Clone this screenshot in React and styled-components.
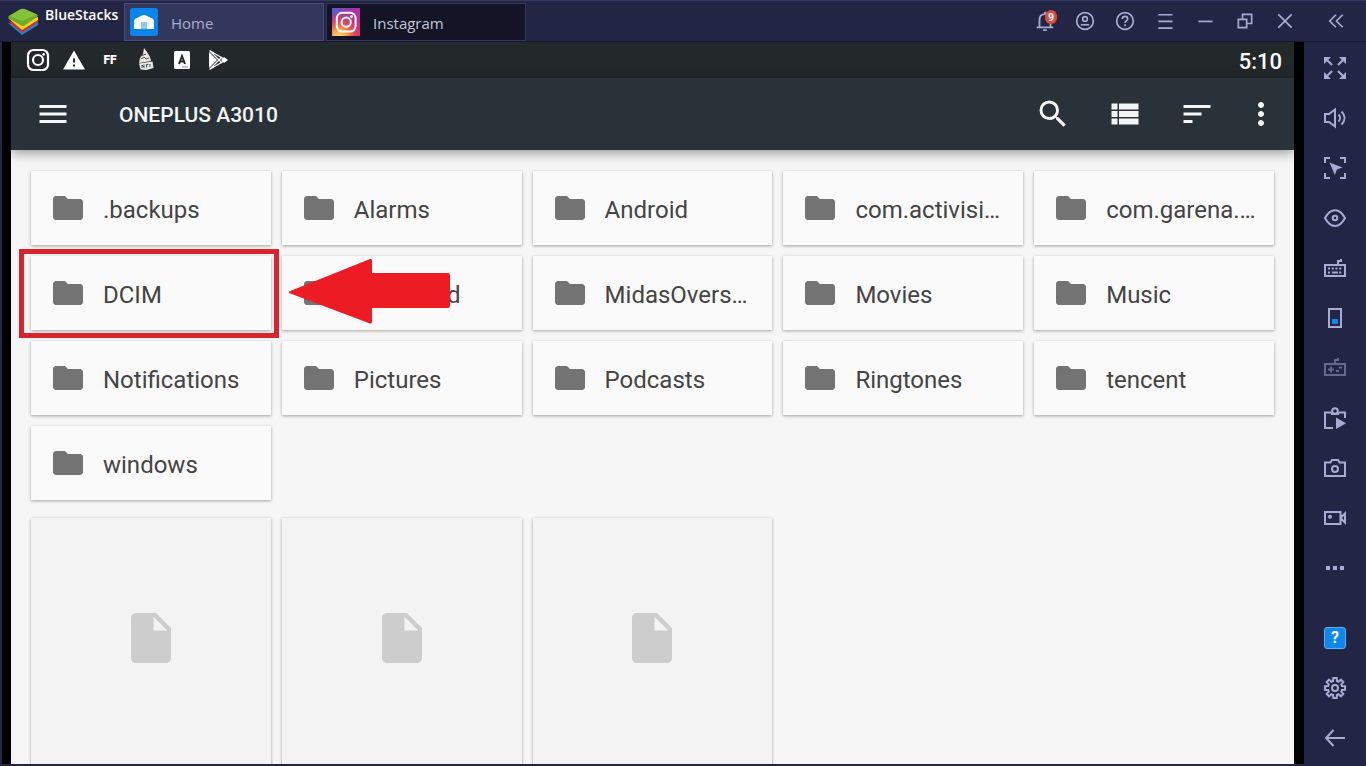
import React from 'react'
import styled, { createGlobalStyle } from 'styled-components'
import {
  MdFolder, MdInsertDriveFile, MdMoreVert, MdSearch, MdSort, MdViewList, MdWarning, MdMenu
} from 'react-icons/md'

const GlobalStyle = createGlobalStyle`
  * {
    box-sizing: border-box;
  }

  body {
    margin: 0;
    font-family: Roboto, sans-serif;
    background-color: #232545;
  }

  button {
    margin: 0;
    padding: 0;
    border: none;
    background: none;
    color: inherit;
    font: inherit;
    cursor: pointer;
  }
`

const Window = styled.div`
  display: flex;
  flex-direction: column;
  height: 100vh;
  overflow: hidden;
  border-top: 1px solid #34375c;
  background-color: #232545;
`

const TitleBar = styled.header`
  display: flex;
  flex: none;
  height: 41px;
  padding-left: 8px;
  border-bottom: 1px solid #15172e;
  font-family: 'Open Sans', sans-serif;
  color: #a9acd0;
`

const Brand = styled.div`
  display: flex;
  gap: 7px;
  width: 116px;
  padding-top: 5px;
  font-size: 14px;
  line-height: 18px;
  font-weight: 600;
  color: #ffffff;

  > svg {
    flex: none;
    margin-top: 2px;
  }
`

const Tab = styled.button`
  display: flex;
  align-items: center;
  gap: 13px;
  
  width: 200px;
  height: 38px;
  margin: 2px 2px 0 0;
  padding: 0 5px;
  border: 1px solid ${({ $active }) => $active ? '#484c7c' : '#33365a'};
  background-color: ${({ $active }) => $active ? '#34375c' : '#131527'};
  color: ${({ $active }) => $active ? '#a9acd0' : '#c4c6d8'};
  font-size: 15px;
`

const TabLabel = styled.span`
  padding-top: 2px;
`

const WindowControls = styled.div`
  display: flex;
  margin-left: auto;
`

const ControlButton = styled.button`
  display: flex;
  align-items: center;
  justify-content: center;
  position: relative;
  
  width: ${({ $wide }) => $wide ? '61px' : '40px'};
  height: 40px;
`

const Badge = styled.span`
  position: absolute;
  top: 9px;
  left: 20px;
  
  width: 12px;
  height: 14px;
  border-radius: 6px;
  background-color: #e04a3c;
  color: #ffffff;
  font-size: 10px;
  line-height: 14px;
  font-weight: 700;
  text-align: center;
`

const Body = styled.div`
  display: flex;
  flex: 1;
  min-height: 0;
`

const Device = styled.main`
  display: flex;
  flex: 1;
  flex-direction: column;
  
  min-width: 0;
  margin: 0 0 2px 2px;
  padding: 0 10px 0 9px;
  background-color: #000000;
  overflow: hidden;
`

const StatusBar = styled.div`
  display: flex;
  flex: none;
  align-items: center;
  gap: 12px;
  
  height: 36px;
  padding: 0 12px 0 15px;
  background-color: #23282b;
  color: #ffffff;
`

const Notice = styled.span`
  display: flex;
  align-items: center;
  justify-content: center;
  width: 24px;
  height: 24px;
  font-size: 12px;
  font-weight: 900;
`

const Clock = styled.time`
  margin-left: auto;
  padding-top: 2px;
  font-size: 22px;
  font-weight: 500;
`

const AppBar = styled.div`
  display: flex;
  flex: none;
  align-items: center;
  position: relative;
  
  height: 72px;
  padding: 0 23px 0 24px;
  background-color: #283238;
  box-shadow: 0 2px 12px rgb(0 0 0 / 45%);
  color: #f5f5f5;
`

const AppBarTitle = styled.h1`
  flex: 1;
  margin: 0 0 0 48px;
  padding-top: 2px;
  font-size: 21px;
  font-weight: 500;
`

const AppBarActions = styled.div`
  display: flex;
  gap: 36px;
`

const AppBarButton = styled.button`
  display: flex;
  align-items: center;
  justify-content: center;
  width: ${({ $narrow }) => $narrow ? '20px' : '36px'};
  height: 36px;

  > svg {
    flex: none;
  }
`

const Content = styled.div`
  flex: 1;
  min-height: 0;
  padding: 21px 20px 0;
  background-color: #f6f6f6;
  overflow: hidden;
`

const Grid = styled.ul`
  display: grid;
  grid-template-columns: repeat(5, minmax(0, 1fr));
  gap: 11px;
  
  margin: 0 0 18px;
  padding: 0;
  list-style-type: none;
`

const GridItem = styled.li`
  position: relative;
`

const FolderCard = styled.button`
  display: flex;
  align-items: center;
  gap: 17px;
  
  width: 100%;
  height: 74px;
  padding: 0 16px 0 19px;
  background-color: #fafafa;
  box-shadow: 0 1px 3px rgb(0 0 0 / 35%);
  color: #737373;

  > svg {
    flex: none;
  }
`

const FolderName = styled.span`
  padding-top: 3px;
  font-size: 24px;
  line-height: 30px;
  color: #444444;
  text-align: left;
  white-space: nowrap;
  overflow: hidden;
  text-overflow: ellipsis;
`

const FileCard = styled.button`
  display: flex;
  align-items: center;
  justify-content: center;
  
  width: 100%;
  height: 240px;
  background-color: #f3f3f3;
  color: #cdcdcd;
`

const FileItem = styled.li`
  height: 312px;
  background-color: #f3f3f3;
  box-shadow: 0 1px 3px rgb(0 0 0 / 35%);
`

const Highlight = styled.div`
  position: absolute;
  inset: -7px -8px -8px -12px;
  z-index: 1;
  border: 5px solid #d9232e;
  pointer-events: none;
`

const Arrow = styled.svg`
  position: absolute;
  top: 2px;
  left: 257px;
  z-index: 2;
  pointer-events: none;
`

const SideBar = styled.nav`
  display: flex;
  flex: none;
  flex-direction: column;
  
  width: 62px;
  padding-top: 1px;
  color: #a9acd0;
`

const SideButton = styled.button`
  display: flex;
  flex: none;
  align-items: center;
  justify-content: center;
  
  height: 50px;
  opacity: ${({ $dimmed }) => $dimmed ? 0.5 : 1};
`

const SideSpacer = styled.div`
  height: 20px;
`

const HelpTile = styled.span`
  width: 22px;
  height: 22px;
  border: 1px solid #5ab0f2;
  border-radius: 3px;
  background-color: #0d87ea;
  color: #ffffff;
  font-size: 16px;
  line-height: 20px;
  font-weight: 700;
  text-align: center;
`

const Line = ({ size = 24, width = 2, children }) => (
  <svg width={size} height={size} viewBox="0 0 24 24" fill="none" stroke="currentColor" strokeWidth={width} aria-hidden="true">
    {children}
  </svg>
)

const BlueStacksLogo = () => (
  <svg width="30" height="28" viewBox="0 0 30 28" aria-hidden="true">
    <path d="M0 15l14 12 16-10v-4L15 17z" fill="#2f7fc4" />
    <path d="M0 13l14 11.500 16-10.500v-3L15 15z" fill="#c9302b" />
    <path d="M0 10l14 12L30 12V9L15 13z" fill="#f8cf1c" />
    <path d="M1 8L12 1.500q2.500-1.500 5-.3L29 6.500q1.500 1 0 2.500L16.500 17.500q-1.700 1.200-3.300 0L.8 10.500Q-.3 9 1 8z" fill="#6cad2b" />
    <path d="M1 8L12 1.500q2.500-1.500 5-.3L29 6.500 14 13z" fill="#86c13c" />
  </svg>
)

const HomeLogo = () => (
  <svg width="28" height="28" viewBox="0 0 28 28" aria-hidden="true">
    <rect width="28" height="28" rx="3" fill="#0a86ea" />
    <path d="M4 12.500q0-1 1-1.500l7.500-3.700q1.500-.7 3 0L23 11q1 .5 1 1.500V20q0 1-1 1H5q-1 0-1-1z" fill="#fff" />
    <path d="M11 14h6v7h-6z" fill="#8cc8f5" />
  </svg>
)

const InstagramLogo = () => (
  <svg width="28" height="28" viewBox="0 0 28 28" fill="none" aria-hidden="true">
    <defs>
      <linearGradient id="insta-base" x1="0" y1="0" x2="1" y2="1">
        <stop offset="0" stopColor="#4c5fd7" />
        <stop offset="0.35" stopColor="#a034ac" />
        <stop offset="1" stopColor="#d62f7a" />
      </linearGradient>
      <radialGradient id="insta-glow" cx="0.25" cy="1.05" r="0.95">
        <stop offset="0" stopColor="#ffdc7a" />
        <stop offset="0.3" stopColor="#fba246" />
        <stop offset="0.6" stopColor="#ee4b50" stopOpacity="0.8" />
        <stop offset="1" stopColor="#d62f7a" stopOpacity="0" />
      </radialGradient>
    </defs>
    <path d="M0 0h28v28H0z" fill="url(#insta-base)" />
    <path d="M0 0h28v28H0z" fill="url(#insta-glow)" />
    <rect x="4.800" y="4.800" width="18.800" height="18.800" rx="5.500" stroke="#fff" strokeWidth="2" />
    <circle cx="14.200" cy="14.200" r="4.600" stroke="#fff" strokeWidth="2" />
    <circle cx="19.500" cy="8.600" r="1.400" fill="#fff" />
  </svg>
)

const ShipIcon = () => (
  <svg width="18" height="24" viewBox="0 0 18 24" fill="none" stroke="#23282b" aria-hidden="true">
    <path d="M7 0l3 4 3 5 1 4-12 2 1-5 3-4z" fill="#e8e8e8" stroke="none" />
    <path d="M2 15.500l13.500-2 1 6.500-7 2-6-.5z" fill="#e8e8e8" stroke="none" />
    <path d="M5 7.500l4-1.500M4 11l3-2 2 2 3-1M5 20v-3l2 2.500v-3M9.500 19.500v-3h2M13 19v-3" strokeWidth="0.800" />
  </svg>
)

// alternates between the tooth radius and the body radius, two points each
const gearPath = (teeth, outer, inner) => {
  const points = []

  for (let i = 0; i < teeth; i++) {
    const angle = (i * 2 * Math.PI) / teeth - Math.PI / 2

    ;[[-0.27, inner], [-0.17, outer], [0.17, outer], [0.27, inner]].forEach(([offset, r]) => {
      points.push(`${(12 + r * Math.cos(angle + offset)).toFixed(2)} ${(12 + r * Math.sin(angle + offset)).toFixed(2)}`)
    })
  }

  return `M${points.join('L')}z`
}

const notices = [
  {
    label: 'Instagram',
    icon: (
      <Line width={2.2}>
        <rect x="2" y="2" width="20" height="20" rx="5.500" />
        <circle cx="12" cy="12" r="5" />
        <circle cx="17.600" cy="6.400" r="1.300" fill="currentColor" stroke="none" />
      </Line>
    )
  },
  { label: 'Warning', icon: <MdWarning size={25} /> },
  { label: 'Free Fire', icon: 'FF' },
  { label: 'Game', icon: <ShipIcon /> },
  {
    label: 'Keyboard',
    icon: (
      <svg width="18" height="18" viewBox="0 0 18 18" aria-hidden="true">
        <rect x="1" width="16" height="18" rx="1.500" fill="#fff" />
        <path d="M6 13L9 5l3 8M7 10.500h4" fill="none" stroke="#23282b" strokeWidth="2" />
        <path d="M9 16h6" stroke="#8a8d8f" />
      </svg>
    )
  },
  {
    label: 'Play Store',
    icon: (
      <svg width="22" height="22" viewBox="0 0 22 22" aria-hidden="true">
        <path d="M2 3v16l8-8z" fill="#fff" />
        <path d="M2.500 1.500L17 10M2.500 20.500L17 12M3 2l12 12M3 20L15 8" fill="none" stroke="#fff" strokeWidth="1.300" />
        <path d="M14 11l3-3 4 3-4 3z" fill="#fff" />
      </svg>
    )
  }
]

const windowControls = [
  {
    label: 'Notifications',
    badge: '9',
    icon: <Line size={22}><path d="M3 19h18M6 18v-7c0-4 2-6.500 6-6.500s6 2.500 6 6.500v7M12 2v3M10 22h4" /></Line>
  },
  {
    label: 'Account',
    icon: <Line size={20}><circle cx="12" cy="12" r="10" /><circle cx="12" cy="9.500" r="2.800" /><path d="M7 16.500h10" /></Line>
  },
  {
    label: 'Help',
    icon: <Line size={20}><circle cx="12" cy="12" r="10" /><path d="M8.800 9.500c0-4 6.400-4 6.400 0 0 2.500-3.200 2.300-3.200 5M12 16v2.200" /></Line>
  },
  { label: 'Menu', icon: <Line size={20}><path d="M4 4.500h17M4 12.500h17M4 20.500h17" /></Line> },
  { label: 'Minimize', icon: <Line size={20}><path d="M4 12.500h17" /></Line> },
  { label: 'Restore', icon: <Line size={20}><path d="M4 10h10v10H4zM9 10V4h11v11h-6" /></Line> },
  { label: 'Close', icon: <Line size={20}><path d="M4 4l16 16M20 4L4 20" /></Line> },
  { label: 'Collapse sidebar', wide: true, icon: <Line size={20}><path d="M12 4.500L4.500 12l7.500 7.500M20 4.500L12.500 12l7.500 7.500" /></Line> }
]

const sideItems = [
  {
    label: 'Full screen',
    icon: (
      <Line>
        <path d="M3 3l6 6M21 3l-6 6M3 21l6-6M21 21l-6-6" />
        <path d="M1 1h7L1 8zM23 1v7l-7-7zM1 23v-7l7 7zM23 23h-7l7-7z" fill="currentColor" stroke="none" />
      </Line>
    )
  },
  {
    label: 'Volume',
    icon: <Line><path d="M2 8h4l6-4.500v17L6 16H2zM15.500 8.500c2 2 2 5 0 7M18.500 5.500c4 4 4 9 0 13" /></Line>
  },
  {
    label: 'Lock cursor',
    icon: (
      <Line>
        <path d="M2 7V2h5M17 2h5v5M22 17v5h-5M7 22H2v-5" />
        <path d="M6.500 6.500l13 5-5.500 2-2.200 5.500z" fill="currentColor" stroke="none" />
      </Line>
    )
  },
  {
    label: 'Show controls',
    icon: <Line><path d="M2 12c5.500-10.500 14.500-10.500 20 0-5.500 10.500-14.500 10.500-20 0z" /><circle cx="12" cy="12" r="2.300" /></Line>
  },
  {
    label: 'Keyboard controls',
    icon: (
      <Line>
        <path d="M2 9h20v11H2zM15 9V5h3V3" />
        <path d="M5 12.500h2M8.700 12.500h2M12.400 12.500h2M16.200 12.500h2M5 16.500h2M9 16.500h6M16.200 16.500h2" />
      </Line>
    )
  },
  {
    label: 'Rotate',
    icon: <Line><path d="M6 3h12v18H6z" /><path d="M9 13h6v5H9z" fill="#1288e8" stroke="none" /></Line>
  },
  {
    label: 'Gamepad',
    dimmed: true,
    icon: (
      <Line>
        <path d="M2 8h20v11H2zM12 8V4h3V2" />
        <path d="M5 13.500h6M8 10.500v6M13 15h3M16 11.500h3" />
      </Line>
    )
  },
  {
    label: 'Macro recorder',
    icon: (
      <Line>
        <path d="M8.500 6.500H2V22h8M15.500 6.500H22V12" />
        <path d="M8 8h8" />
        <circle cx="12" cy="5" r="2.800" />
        <path d="M13 11.500l10 5.800-10 5.700z" fill="currentColor" stroke="none" />
      </Line>
    )
  },
  {
    label: 'Screenshot',
    icon: <Line><path d="M2 6.500h5.500L9 4h6l1.500 2.500H22V20H2z" /><circle cx="12" cy="13" r="3" /></Line>
  },
  {
    label: 'Record video',
    icon: (
      <Line>
        <path d="M2 6h15.500v12H2zM17.500 12L22 7.500v9z" />
        <circle cx="7" cy="10.700" r="2" fill="currentColor" stroke="none" />
      </Line>
    )
  },
  {
    label: 'More',
    icon: <Line><path d="M3 10h4v4H3zM10 10h4v4h-4zM17 10h4v4h-4z" fill="currentColor" stroke="none" /></Line>
  }
]

const bottomItems = [
  { label: 'Help', icon: <HelpTile>?</HelpTile> },
  { label: 'Settings', icon: <Line><path d={gearPath(8, 10.2, 7.2)} /><circle cx="12" cy="12" r="3" /></Line> },
  { label: 'Back', icon: <Line><path d="M22 12H3M10.500 4L3 12l7.500 8" /></Line> }
]

const actions = [
  { label: 'Search', icon: <MdSearch size={36} /> },
  { label: 'List view', icon: <MdViewList size={36} /> },
  { label: 'Sort', icon: <MdSort size={36} /> },
  { label: 'More options', narrow: true, icon: <MdMoreVert size={36} /> }
]

const folders = [
  '.backups', 'Alarms', 'Android', 'com.activisi…', 'com.garena.…',
  'DCIM', 'Download', 'MidasOvers…', 'Movies', 'Music',
  'Notifications', 'Pictures', 'Podcasts', 'Ringtones', 'tencent',
  'windows'
]

const files = ['file-1', 'file-2', 'file-3']

const App = () => {
  return (
    <>
      <GlobalStyle />
      <Window>
        <TitleBar>
          <Brand>
            <BlueStacksLogo />
            BlueStacks
          </Brand>
          <Tab $active>
            <HomeLogo />
            <TabLabel>Home</TabLabel>
          </Tab>
          <Tab>
            <InstagramLogo />
            <TabLabel>Instagram</TabLabel>
          </Tab>
          <WindowControls>
            {
              windowControls.map(({ label, icon, badge, wide }) => (
                <ControlButton key={label} aria-label={label} $wide={wide}>
                  {icon}
                  { badge && <Badge>{ badge }</Badge> }
                </ControlButton>
              ))
            }
          </WindowControls>
        </TitleBar>
        <Body>
          <Device>
            <StatusBar>
              {
                notices.map(({ label, icon }) => <Notice key={label} title={label}>{ icon }</Notice>)
              }
              <Clock>5:10</Clock>
            </StatusBar>
            <AppBar>
              <AppBarButton aria-label="Open menu"><MdMenu size={36} /></AppBarButton>
              <AppBarTitle>ONEPLUS A3010</AppBarTitle>
              <AppBarActions>
                {
                  actions.map(({ label, icon, narrow }) => (
                    <AppBarButton key={label} aria-label={label} $narrow={narrow}>{ icon }</AppBarButton>
                  ))
                }
              </AppBarActions>
            </AppBar>
            <Content>
              <Grid>
                {
                  folders.map((name) => (
                    <GridItem key={name}>
                      <FolderCard>
                        <MdFolder size={36} />
                        <FolderName>{ name }</FolderName>
                      </FolderCard>
                      { name === 'DCIM' && (
                        <>
                          <Highlight />
                          <Arrow width="164" height="68" viewBox="0 0 164 68" aria-hidden="true">
                            <path d="M1 33.500L82 1q2-.5 2 1v13h76q2 0 2 2v31q0 2-2 2H84v14q0 2-2 1.500L1 35z" fill="#ed1c24" />
                          </Arrow>
                        </>
                      ) }
                    </GridItem>
                  ))
                }
              </Grid>
              <Grid>
                {
                  files.map((id) => (
                    <FileItem key={id}>
                      <FileCard aria-label="File">
                        <MdInsertDriveFile size={60} />
                      </FileCard>
                    </FileItem>
                  ))
                }
              </Grid>
            </Content>
          </Device>
          <SideBar>
            {
              sideItems.map(({ label, icon, dimmed }) => (
                <SideButton key={label} aria-label={label} $dimmed={dimmed}>{ icon }</SideButton>
              ))
            }
            <SideSpacer />
            {
              bottomItems.map(({ label, icon }) => (
                <SideButton key={label} aria-label={label}>{ icon }</SideButton>
              ))
            }
          </SideBar>
        </Body>
      </Window>
    </>
  )
}

export default App
